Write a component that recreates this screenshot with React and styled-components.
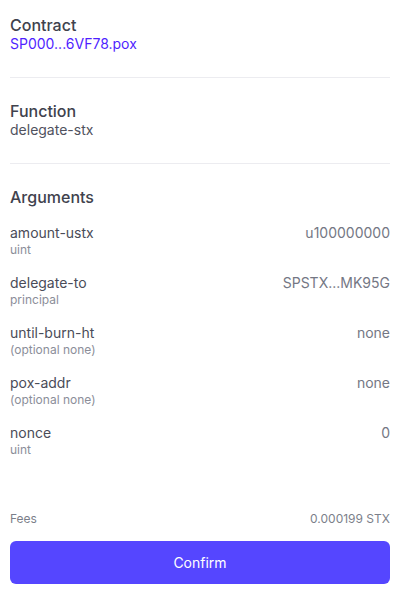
import React from "react";
import styled, { createGlobalStyle } from "styled-components";

const GlobalStyle = createGlobalStyle`
  body {
    margin: 0;
    background: #ffffff;
    font-family: Inter, "Noto Sans", sans-serif;
  }
`;

const Page = styled.div`
  display: flex;
  flex-direction: column;
  height: 593px;
  box-sizing: border-box;
  padding: 15px 16px 9px 10px;
`;

const Section = styled.section`
  display: flex;
  flex-direction: column;
  padding-bottom: ${({ $last }) => ($last ? "0" : "24px")};
  margin-bottom: ${({ $last }) => ($last ? "0" : "23px")};
  border-bottom: ${({ $last }) => ($last ? "none" : "1px solid #ececf0")};
`;

const Heading = styled.h2`
  margin: 0;
  font-size: 16px;
  line-height: 20px;
  font-weight: 500;
  color: #40424d;
`;

const Value = styled.span`
  font-size: 14px;
  line-height: 18px;
  color: ${({ $link }) => ($link ? "#4f1fff" : "#50525e")};
`;

const ArgList = styled.div`
  display: flex;
  flex-direction: column;
  gap: 16px;
  margin-top: 17px;
`;

const ArgRow = styled.div`
  display: flex;
  justify-content: space-between;
  align-items: flex-start;
`;

const ArgInfo = styled.div`
  display: flex;
  flex-direction: column;
`;

const ArgName = styled.span`
  font-size: 14px;
  line-height: 18px;
  color: #4a4c58;
`;

const ArgType = styled.span`
  font-size: 12px;
  line-height: 16px;
  color: #8b8e99;
`;

const ArgValue = styled.span`
  font-size: 14px;
  line-height: 18px;
  color: #747784;
`;

const Footer = styled.div`
  margin-top: auto;
  display: flex;
  flex-direction: column;
  gap: 14px;
`;

const FeeRow = styled.div`
  display: flex;
  justify-content: space-between;
  font-size: 12px;
  line-height: 16px;
  color: #7c7f8a;
`;

const ConfirmButton = styled.button`
  height: 43px;
  border: none;
  border-radius: 6px;
  background: #5546ff;
  color: #ffffff;
  font-family: inherit;
  font-size: 14px;
  font-weight: 400;
  cursor: pointer;
`;

const args = [
  { name: "amount-ustx", type: "uint", value: "u100000000" },
  { name: "delegate-to", type: "principal", value: "SPSTX...MK95G" },
  { name: "until-burn-ht", type: "(optional none)", value: "none" },
  { name: "pox-addr", type: "(optional none)", value: "none" },
  { name: "nonce", type: "uint", value: "0" },
];

const App = () => {
  return (
    <>
      <GlobalStyle />
      <Page>
        <Section>
          <Heading>Contract</Heading>
          <Value $link>SP000...6VF78.pox</Value>
        </Section>
        <Section>
          <Heading>Function</Heading>
          <Value>delegate-stx</Value>
        </Section>
        <Section $last>
          <Heading>Arguments</Heading>
          <ArgList>
            {args.map((a) => (
              <ArgRow key={a.name}>
                <ArgInfo>
                  <ArgName>{a.name}</ArgName>
                  <ArgType>{a.type}</ArgType>
                </ArgInfo>
                <ArgValue>{a.value}</ArgValue>
              </ArgRow>
            ))}
          </ArgList>
        </Section>
        <Footer>
          <FeeRow>
            <span>Fees</span>
            <span>0.000199 STX</span>
          </FeeRow>
          <ConfirmButton>Confirm</ConfirmButton>
        </Footer>
      </Page>
    </>
  );
};

export default App;
